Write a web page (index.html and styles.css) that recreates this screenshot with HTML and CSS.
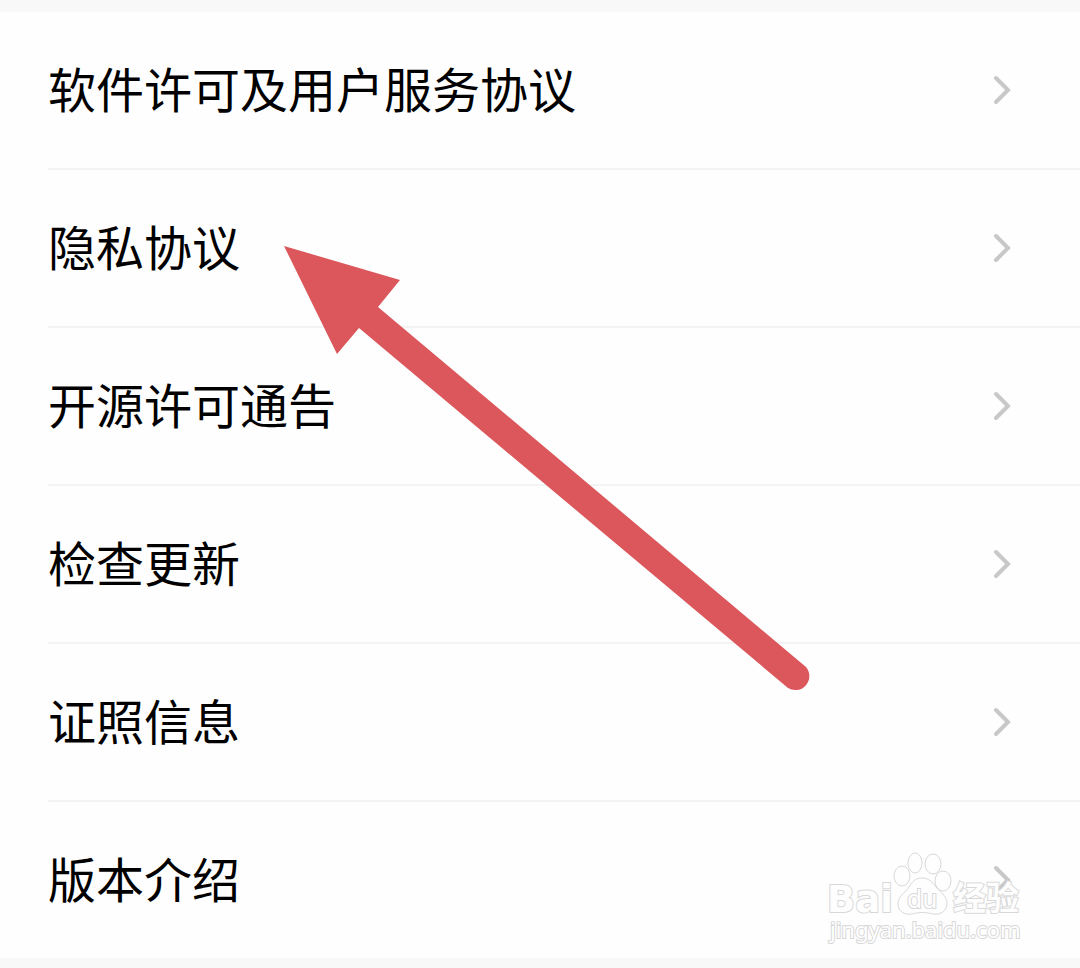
FILE: index.html
```html
<!DOCTYPE html>
<html lang="zh-CN">
<head>
<meta charset="utf-8">
<meta name="viewport" content="width=device-width, initial-scale=1">
<title>协议与版本</title>
<link rel="stylesheet" href="styles.css">
</head>
<body>
<main class="screen">
  <ul class="menu">
    <li class="menu-item"><a class="menu-link" href="#license"><span class="menu-label">软件许可及用户服务协议</span><svg class="chevron" viewBox="0 0 20 30" aria-hidden="true"><path d="M4 3 16 15 4 27"/></svg></a></li>
    <li class="menu-item"><a class="menu-link" href="#privacy"><span class="menu-label">隐私协议</span><svg class="chevron" viewBox="0 0 20 30" aria-hidden="true"><path d="M4 3 16 15 4 27"/></svg></a></li>
    <li class="menu-item"><a class="menu-link" href="#opensource"><span class="menu-label">开源许可通告</span><svg class="chevron" viewBox="0 0 20 30" aria-hidden="true"><path d="M4 3 16 15 4 27"/></svg></a></li>
    <li class="menu-item"><a class="menu-link" href="#update"><span class="menu-label">检查更新</span><svg class="chevron" viewBox="0 0 20 30" aria-hidden="true"><path d="M4 3 16 15 4 27"/></svg></a></li>
    <li class="menu-item"><a class="menu-link" href="#certificates"><span class="menu-label">证照信息</span><svg class="chevron" viewBox="0 0 20 30" aria-hidden="true"><path d="M4 3 16 15 4 27"/></svg></a></li>
    <li class="menu-item"><a class="menu-link" href="#version"><span class="menu-label">版本介绍</span><svg class="chevron" viewBox="0 0 20 30" aria-hidden="true"><path d="M4 3 16 15 4 27"/></svg></a></li>
  </ul>
  <svg class="pointer" viewBox="0 0 528 446" aria-hidden="true">
    <path d="M0 0 116 34 94 61 522 421A14 14 0 0 1 504 442L75 82 53 108Z"/>
  </svg>
  <svg class="watermark" viewBox="0 0 200 98" role="img" aria-label="Baidu 经验">
    <text class="mark-bai" x="1" y="62">Bai</text>
    <ellipse cx="76" cy="26" rx="8" ry="10"/>
    <ellipse cx="89" cy="13" rx="7" ry="10"/>
    <ellipse cx="107" cy="14" rx="8" ry="10"/>
    <ellipse cx="117" cy="31" rx="8" ry="10"/>
    <path d="M96 28C89 28 86 32 83 37C79 43 72 46 72 54C72 62 79 65 86 64C93 62 100 62 107 64C115 65 121 61 121 53C121 46 114 42 110 37C106 32 103 28 96 28Z"/>
    <text class="mark-du" x="81" y="58">du</text>
    <text class="mark-cjk" x="127" y="60">经验</text>
    <text class="mark-url" x="4" y="88">jingyan.baidu.com</text>
  </svg>
</main>
</body>
</html>
```
FILE: styles.css
```css
body {
  margin: 0;
  background: #f8f8f8;
  font-family: "Noto Sans CJK SC", sans-serif;
}

.screen {
  position: relative;
  padding: 12px 0 10px;
}

.menu {
  margin: 0;
  padding: 0 0 0 48px;
  list-style: none;
  background: #fefefe;
}

.menu-item {
  border-bottom: 2px solid #f3f3f3;
}

.menu-item:last-child {
  border-bottom: 0;
}

.menu-link {
  display: flex;
  align-items: center;
  justify-content: space-between;
  padding: 42px 68px 42px 0;
  color: #000;
  font-size: 48px;
  line-height: 66px;
  text-decoration: none;
}

.menu-label {
  padding-bottom: 6px;
}

.chevron {
  flex: none;
  width: 20px;
  height: 30px;
  fill: none;
  stroke: #c8c8c8;
  stroke-width: 4;
  stroke-linecap: round;
}

.pointer {
  position: absolute;
  top: 246px;
  left: 284px;
  width: 528px;
  height: 446px;
  fill: #db575b;
}

.watermark {
  position: absolute;
  right: 54px;
  bottom: 20px;
  width: 200px;
  height: 98px;
  fill: #fefefe;
  stroke: #d8d8d8;
  stroke-width: 1;
}

.watermark text {
  stroke-width: 2;
  paint-order: stroke;
}

.mark-bai {
  font: bold 37px "DejaVu Sans", sans-serif;
}

.mark-du {
  font: 24px "DejaVu Sans", sans-serif;
}

.mark-cjk {
  font: bold 33px "Noto Sans CJK SC", sans-serif;
}

.mark-url {
  font: 22px "Noto Sans", sans-serif;
}
```
